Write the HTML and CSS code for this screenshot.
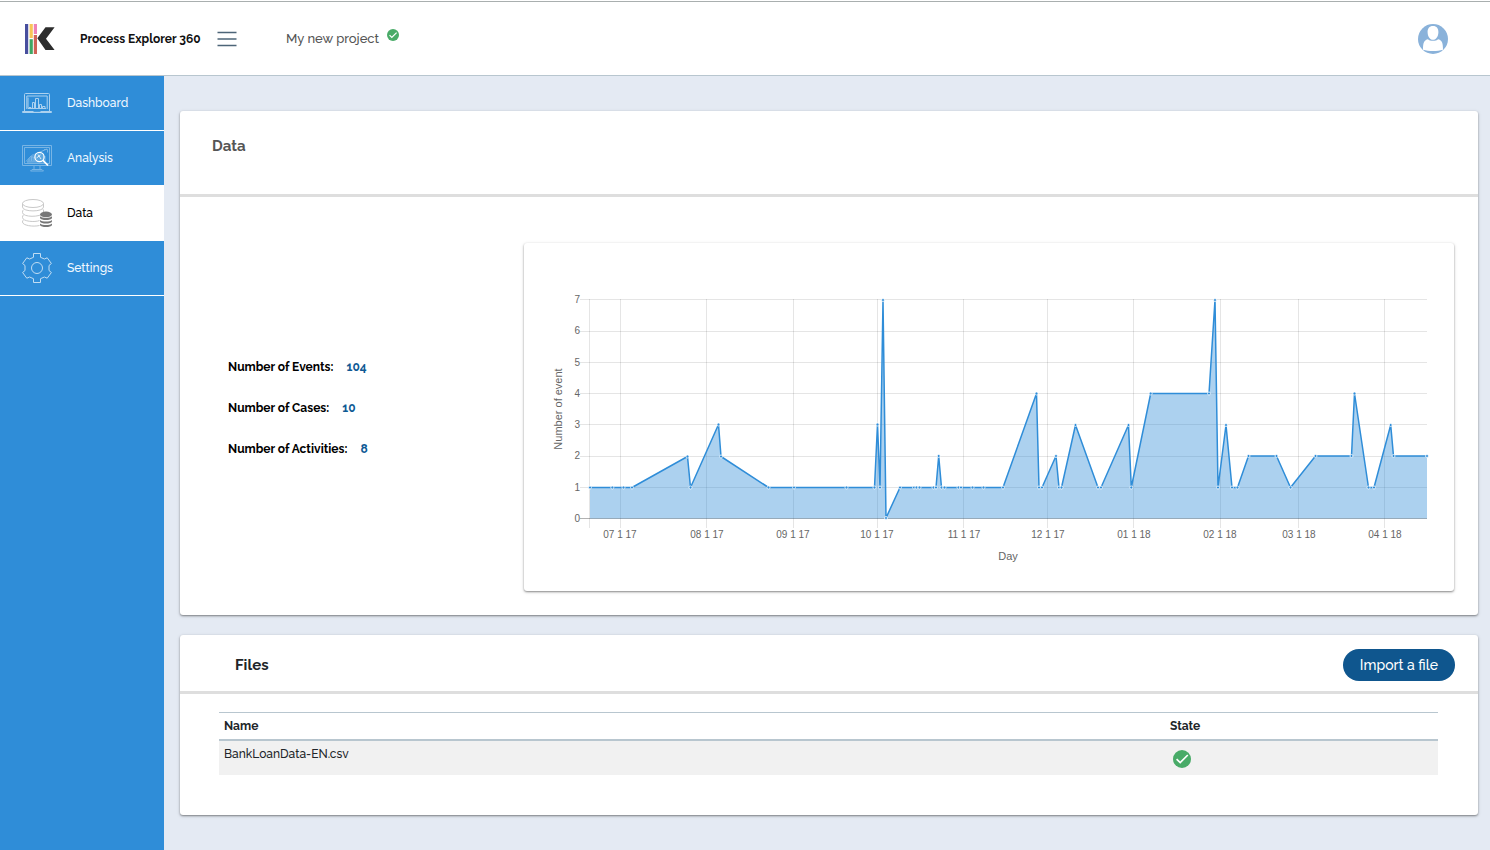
FILE: index.html
```
<!DOCTYPE html>
<html lang="en">
<head>
    <meta charset="UTF-8">
    <meta name="viewport" content="width=device-width, initial-scale=1.0">
    <title>Process Explorer 360</title>
    <link rel="stylesheet" href="styles.css">
</head>
<body>
    <header class="topbar">
        <svg class="logo" viewBox="0 0 30 30" aria-hidden="true">
            <rect x="0" y="0" width="3.2" height="30" fill="#484f9e"/>
            <rect x="4.6" y="0" width="3.2" height="14" fill="#f8c557"/>
            <rect x="4.6" y="15.2" width="3.2" height="14.8" fill="#3fa764"/>
            <rect x="8.8" y="0" width="3.2" height="10" fill="#ee82b4"/>
            <rect x="8.8" y="11" width="3.2" height="19" fill="#cf6256"/>
            <path d="M12.3 14.3L20.5 3.3H29.6L21 14.7L29.6 26H20.5Z" fill="#2d2d2d"/>
        </svg>
        <span class="brand">Process Explorer 360</span>
        <button class="menu-button" type="button" aria-label="Menu">
            <svg viewBox="0 0 20 16" width="20" height="16">
                <path d="M0.5 1.5H19.5M0.5 8H19.5M0.5 14.5H19.5" stroke="#4d6578" stroke-width="1.7"/>
            </svg>
        </button>
        <span class="project">My new project</span>
        <svg class="project-check" viewBox="0 0 18 18" aria-label="Saved">
            <circle cx="9" cy="9" r="9" fill="#49ab68"/>
            <path d="M3.8 9.2L7.2 12.6L14.4 5.4" fill="none" stroke="#fff" stroke-width="1.8"/>
        </svg>
        <button class="avatar" type="button" aria-label="Account">
            <svg viewBox="0 0 30 30" width="30" height="30">
                <circle cx="15" cy="15" r="15" fill="#8ab2da"/>
                <path d="M15 2C18.8 2 20.5 4.7 20.4 8.2C20.3 12.3 18.2 15.8 15 15.8C11.8 15.8 9.7 12.3 9.6 8.2C9.5 4.7 11.2 2 15 2Z" fill="#fff"/>
                <path d="M10 15.2C11.5 17.3 18.5 17.3 20 15.2C23.7 16 25 18.2 25 25.8C19.5 27.4 10.5 27.4 5 25.8C5 18.2 6.3 16 10 15.2Z" fill="#fff"/>
            </svg>
        </button>
    </header>

    <div class="layout">
        <nav class="sidebar">
            <a href="#" class="nav-item">
                <svg class="nav-icon" viewBox="0 0 30 30" fill="none" stroke="#fff" opacity="0.6">
                    <path d="M2.5 23V6.5Q2.5 5.5 3.5 5.5H26.5Q27.5 5.5 27.5 6.5V23M4.8 21V8H25.2V21"/>
                    <path d="M0.5 23.5H11L12 24.3H18L19 23.5H29.5V24.5H0.5Z"/>
                    <path d="M7 20.5V19.5H9V20.5M10.5 20.5V14.5H12.5V20.5M13.5 20.5V10.5H16.5V20.5M17.5 20.5V16.5H19.5V20.5M20.5 20.5V18.5H23V20.5M6 9.5V20.5H24"/>
                </svg>
                Dashboard
            </a>
            <a href="#" class="nav-item">
                <svg class="nav-icon" viewBox="0 0 30 30" fill="none" stroke="#fff">
                    <g opacity="0.35">
                        <path d="M0.5 2.5H29.5V22.5H0.5ZM2.5 4.5H27.5V20.5H2.5Z"/>
                        <path d="M12 23V26.5M18 23V26.5M8.5 28H21.5M8.5 28L10 26.5H20L21.5 28"/>
                        <path d="M4 18.5L9 13L12 15L18 9L25 6M22 6.5H25.5V9.5M5 19H22M7 18V15.5M9.5 18V14M12 18V15M23 18V13"/>
                        <path d="M5 19L10 12L16 10L20 18Z" fill="#fff" opacity="0.6"/>
                    </g>
                    <circle cx="17.5" cy="14" r="4.6" fill="#5ea8df" stroke-width="1.2"/>
                    <path d="M16 11.5L19 16M14.5 15L18.5 12" opacity="0.8"/>
                    <path d="M21 17.3L26 22.5" stroke-width="1.8"/>
                </svg>
                Analysis
            </a>
            <a href="#" class="nav-item active">
                <svg class="nav-icon" viewBox="0 0 30 30" fill="none" stroke="#c9c9c9">
                    <ellipse cx="11" cy="5.5" rx="10.5" ry="4"/>
                    <path d="M0.5 5.5V9C0.5 14.2 21.5 14.2 21.5 9V5.5M1.5 11.8Q0.5 12.3 0.5 14.5C0.5 19.5 19 19.5 21.5 14.8V11.8L20.5 11M1.5 17Q0.5 17.5 0.5 19.5C0.5 23.5 13 24.5 17.5 22.5M1.5 22Q0.5 22.5 0.5 24C0.5 27.5 11 29 17.5 27.5"/>
                    <g fill="#777" stroke="none">
                        <ellipse cx="24" cy="16.4" rx="6" ry="2.8"/>
                        <path d="M18 18.3C20 20.5 28 20.5 30 18.3V20C29 22.8 19 22.8 18 20Z"/>
                        <path d="M18 22C20 24 28 24 30 22V23.5C29 26.3 19 26.3 18 23.5Z"/>
                        <path d="M18 25.5C20 27.5 28 27.5 30 25.5V27C29 29.8 19 29.8 18 27Z"/>
                    </g>
                </svg>
                Data
            </a>
            <a href="#" class="nav-item">
                <svg class="nav-icon" viewBox="0 0 30 30" fill="none" stroke="#fff" opacity="0.7">
                    <path d="M11.5 0.5H18.5V4.3L22.4 6L25.2 4.8L29.4 10.5L27 12.5V17.5L29.4 19.5L25.2 25.2L22.4 24L18.5 25.7V29.5H11.5V25.7L7.6 24L4.8 25.2L0.6 19.5L3 17.5V12.5L0.6 10.5L4.8 4.8L7.6 6L11.5 4.3Z" stroke-linejoin="round"/>
                    <circle cx="15" cy="15" r="5.5"/>
                </svg>
                Settings
            </a>
        </nav>

        <main class="content">
            <section class="card">
                <div class="card-header data-header">
                    <h1>Data</h1>
                </div>
                <div class="data-body">
                    <dl class="stats">
                        <div class="stat"><dt>Number of Events:</dt><dd>104</dd></div>
                        <div class="stat"><dt>Number of Cases:</dt><dd>10</dd></div>
                        <div class="stat"><dt>Number of Activities:</dt><dd>8</dd></div>
                    </dl>
                    <div class="chart-card">
                        <svg class="chart" viewBox="0 0 930 348" role="img" aria-label="Number of event per day">
                            <defs>
                                <marker id="dot" markerUnits="userSpaceOnUse" markerWidth="6" markerHeight="6" refX="3" refY="3">
                                    <circle cx="3" cy="3" r="1.5" class="dot"/>
                                </marker>
                            </defs>
                            <!-- grid -->
                            <path class="grid" d="M56 56.5H903M56 88.5H903M56 119.5H903M56 150.5H903M56 181.5H903M56 213.5H903M56 244.5H903"/>
                            <path class="grid" d="M65.5 56V285M96.5 56V285M182.5 56V285M269.5 56V285M353.5 56V285M439.5 56V285M523.5 56V285M609.5 56V285M696.5 56V285M774.5 56V285M860.5 56V285"/>
                            <path class="axis" d="M56 275.5H903"/>
                            <!-- series -->
                            <polygon class="area" points="66,275.5 66,244.5 108,244.5 163.5,213.5 166.5,244.5 194.5,181.5 197,213.5 244.5,244.5 350.5,244.5 353.5,181.5 356,244.5 359,57 362,275 376,244.5 412,244.5 414.7,213 417.5,244.5 479,244.5 512.5,150.5 515,244.5 518,244.5 532,213 535,244.5 537.5,244.5 551.5,182 574,244.5 577,244.5 604.5,182 607.3,244.5 626.7,150.5 685,150.5 691,57 694,244.5 702,182 708,244.5 713.5,244.5 724.5,213 752.5,213 766.5,244.5 791.5,213 827.5,213 830.5,150.5 844.5,244.5 850,244.5 866.7,182 869.5,213 903,213 903,275.5"/>
                            <polyline class="line" points="66,244.5 88.3,244.5 99.5,244.5 108,244.5 163.5,213.5 166.5,244.5 194.5,181.5 197,213.5 244.5,244.5 270,244.5 322.5,244.5 350.5,244.5 353.5,181.5 356,244.5 359,57 362,275 376,244.5 390,244.5 392.5,244.5 395.5,244.5 409.5,244.5 412,244.5 414.7,213 417.5,244.5 420.5,244.5 434.5,244.5 437,244.5 448.5,244.5 459.5,244.5 479,244.5 512.5,150.5 515,244.5 518,244.5 532,213 535,244.5 537.5,244.5 551.5,182 574,244.5 577,244.5 604.5,182 607.3,244.5 626.7,150.5 685,150.5 691,57 694,244.5 702,182 708,244.5 713.5,244.5 724.5,213 752.5,213 766.5,244.5 791.5,213 827.5,213 830.5,150.5 844.5,244.5 850,244.5 866.7,182 869.5,213 903,213"/>
                            <g class="labels y-labels">
                                <text x="56" y="60">7</text>
                                <text x="56" y="91">6</text>
                                <text x="56" y="123">5</text>
                                <text x="56" y="154">4</text>
                                <text x="56" y="185">3</text>
                                <text x="56" y="216">2</text>
                                <text x="56" y="248">1</text>
                                <text x="56" y="279">0</text>
                            </g>
                            <g class="labels x-labels">
                                <text x="96" y="295">07 1 17</text>
                                <text x="183" y="295">08 1 17</text>
                                <text x="269" y="295">09 1 17</text>
                                <text x="353" y="295">10 1 17</text>
                                <text x="440" y="295">11 1 17</text>
                                <text x="524" y="295">12 1 17</text>
                                <text x="610" y="295">01 1 18</text>
                                <text x="696" y="295">02 1 18</text>
                                <text x="775" y="295">03 1 18</text>
                                <text x="861" y="295">04 1 18</text>
                            </g>
                            <text class="axis-title" x="484" y="317">Day</text>
                            <text class="axis-title" transform="translate(38 166) rotate(-90)">Number of event</text>
                        </svg>
                    </div>
                </div>
            </section>

            <section class="card">
                <div class="card-header files-header">
                    <h2>Files</h2>
                    <button class="import-button" type="button">Import a file</button>
                </div>
                <div class="files-body">
                    <table class="files-table">
                        <thead>
                            <tr>
                                <th class="name-column" scope="col">Name</th>
                                <th scope="col">State</th>
                            </tr>
                        </thead>
                        <tbody>
                            <tr>
                                <td>BankLoanData-EN.csv</td>
                                <td>
                                    <svg class="state-check" viewBox="0 0 18 18" aria-label="Imported">
                                        <circle cx="9" cy="9" r="9" fill="#49ab68"/>
                                        <path d="M3.6 9.2L7.2 12.6L14.8 5" fill="none" stroke="#fff" stroke-width="1.7"/>
                                    </svg>
                                </td>
                            </tr>
                        </tbody>
                    </table>
                </div>
            </section>
        </main>
    </div>
</body>
</html>
```
FILE: styles.css
```
* {
    margin: 0;
    padding: 0;
    box-sizing: border-box;
}

body {
    font-family: Raleway, Lato, sans-serif;
    font-size: 12px;
    color: #212529;
    background: #e4eaf3;
    min-height: 100vh;
    display: flex;
    flex-direction: column;
    border-top: 1px solid #fff;
}

button {
    font-family: inherit;
    border: none;
    background: none;
    cursor: pointer;
}

svg {
    display: block;
}

.topbar {
    display: flex;
    align-items: center;
    height: 75px;
    padding: 0 42px 0 25px;
    background: #fff;
    border-top: 1px solid #a9afaf;
    border-bottom: 1px solid #b8c6cf;
}

.logo {
    width: 30px;
    height: 30px;
    margin-right: 25px;
}

.brand {
    min-width: 122px;
    font-weight: 700;
    color: #111;
}

.menu-button {
    margin: 0 49px 0 15px;
}

.project {
    font-size: 13px;
    font-weight: 500;
    color: #555;
}

.project-check {
    width: 12px;
    height: 12px;
    margin: 0 0 8px 8px;
}

.avatar {
    margin-left: auto;
}

.layout {
    flex: 1;
    display: flex;
}

.sidebar {
    flex: 0 0 164px;
    background: #2f8dd8;
}

.nav-item {
    display: flex;
    align-items: center;
    gap: 15px;
    height: 55px;
    padding-left: 22px;
    border-bottom: 1px solid #fff;
    color: #f0f8ff;
    font-weight: 500;
    text-decoration: none;
}

.nav-item.active {
    background: #fff;
    color: #000;
}

.nav-icon {
    width: 30px;
    height: 30px;
}

.content {
    flex: 1;
    min-width: 0;
    display: flex;
    flex-direction: column;
    gap: 20px;
    padding: 35px 12px 35px 16px;
}

.card,
.chart-card {
    background: #fff;
    border-radius: 3px;
    box-shadow: 0 1px 2px rgba(0, 0, 0, 0.4), 0 1px 4px rgba(0, 0, 0, 0.12);
}

.card-header {
    border-bottom: 3px solid #dedede;
}

.data-header {
    height: 86px;
    padding: 25px 32px;
}

h1,
h2 {
    font-size: 15px;
    line-height: 20px;
    font-weight: 700;
}

h1 {
    color: #555;
}

.data-body {
    display: grid;
    grid-template-columns: 344px 1fr;
    align-items: center;
    padding: 46px 24px 24px 0;
}

/* bottom padding keeps the figures level with the middle of the plot */
.stats {
    display: flex;
    flex-direction: column;
    gap: 21px;
    padding: 0 0 18px 48px;
    line-height: 20px;
    font-weight: 700;
}

.stat {
    display: flex;
    gap: 13px;
}

.stat dt {
    color: #000;
}

.stat dd {
    color: #0f5a94;
}

.chart {
    width: 100%;
    height: auto;
}

.grid {
    stroke: rgba(0, 0, 0, 0.1);
}

.axis {
    stroke: rgba(0, 0, 0, 0.3);
}

.area {
    fill: rgba(47, 141, 216, 0.4);
}

.line {
    fill: none;
    stroke: #2f8dd8;
    stroke-width: 1.5;
    stroke-linejoin: round;
    marker-start: url(#dot);
    marker-mid: url(#dot);
    marker-end: url(#dot);
}

.dot {
    fill: #2f8dd8;
    stroke: rgba(255, 255, 255, 0.75);
}

.labels,
.axis-title {
    font-family: "Liberation Sans", Arial, sans-serif;
    font-size: 10px;
    fill: #666;
}

.y-labels {
    text-anchor: end;
}

.x-labels,
.axis-title {
    text-anchor: middle;
}

.axis-title {
    font-size: 11px;
}

.files-header {
    display: flex;
    align-items: center;
    justify-content: space-between;
    height: 59px;
    padding: 4px 23px 0 55px;
}

.import-button {
    height: 32px;
    padding: 0 17px;
    border-radius: 16px;
    background: #0f568e;
    color: #fff;
    font-size: 14px;
    font-weight: 500;
}

.files-body {
    padding: 18px 40px 40px 39px;
}

.files-table {
    width: 100%;
    border-collapse: separate;
    border-spacing: 0;
    table-layout: fixed;
    text-align: left;
}

.files-table th {
    height: 29px;
    padding: 0 5px;
    border-top: 1px solid #b8c6cf;
    border-bottom: 2px solid #b8c6cf;
    font-weight: 700;
}

.files-table td {
    height: 34px;
    padding: 4px 5px;
    background: #f1f1f1;
    vertical-align: top;
    line-height: 18px;
    font-weight: 500;
}

.name-column {
    width: 77.6%;
}

.state-check {
    width: 18px;
    height: 18px;
    margin: 5px 0 0 3px;
}
```
